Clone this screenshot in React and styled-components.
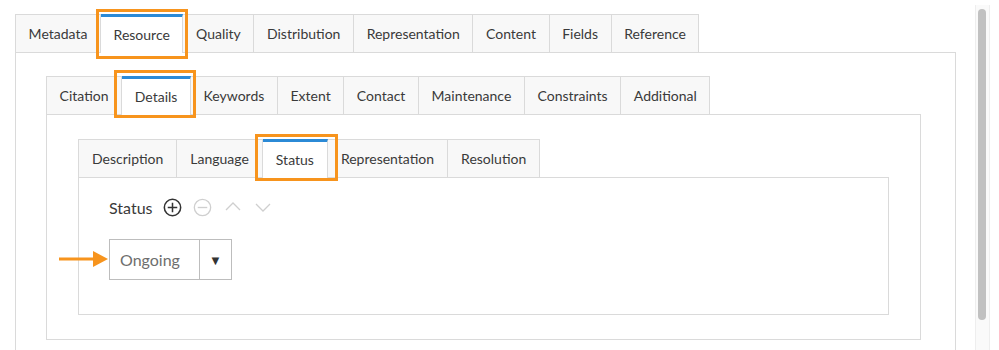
import styled, { createGlobalStyle } from "styled-components";

const GlobalStyle = createGlobalStyle`
  html, body {
    margin: 0;
    padding: 0;
    background: #fff;
    overflow: hidden;
  }
  body {
    font-family: Lato, "Noto Sans", sans-serif;
    color: #3a3a3a;
  }
`;

const ORANGE = "#f7941d";
const BLUE = "#2b8ad6";
const LINE = "#dadada";

const outerTabs = ["Metadata", "Resource", "Quality", "Distribution", "Representation", "Content", "Fields", "Reference"];
const detailTabs = ["Citation", "Details", "Keywords", "Extent", "Contact", "Maintenance", "Constraints", "Additional"];
const statusTabs = ["Description", "Language", "Status", "Representation", "Resolution"];

const Page = styled.div`
  display: flex;
  width: 999px;
  height: 350px;
`;

const Main = styled.div`
  flex: 1;
  padding: 14px 19px 0 15px;
  min-width: 0;
`;

const Scrollbar = styled.div`
  width: 13px;
  margin: 5px 9px 0 0;
  border-left: 1px solid #eee;
  border-right: 1px solid #eee;
  background: #fafafa;
  padding-top: 4px;
`;

const Thumb = styled.div`
  width: 8px;
  height: 311px;
  margin-left: 2px;
  border-radius: 4px;
  background: #c1c1c1;
`;

const TabBar = styled.div`
  display: flex;
  align-items: flex-end;
  height: 38px;
`;

const Tab = styled.div`
  position: relative;
  box-sizing: border-box;
  height: ${(p) => (p.$active ? "39px" : "38px")};
  margin-bottom: ${(p) => (p.$active ? "-1px" : "0")};
  display: flex;
  align-items: center;
  padding: 0 ${(p) => p.$pad || 12}px;
  padding-bottom: ${(p) => (p.$active ? "1px" : "0")};
  font-size: 14px;
  color: #3a3a3a;
  white-space: nowrap;
  background: ${(p) => (p.$active ? "#fff" : "#f8f8f8")};
  border: 1px solid ${LINE};
  border-bottom: none;
  border-left-width: ${(p) => (p.$first ? "1px" : "0")};
  border-top: ${(p) => (p.$active ? `3px solid ${BLUE}` : `1px solid ${LINE}`)};
  z-index: ${(p) => (p.$active ? 2 : 1)};

  ${(p) =>
    p.$mark &&
    `
    &::after {
      content: "";
      position: absolute;
      top: ${p.$mark[0]}px;
      right: ${p.$mark[1]}px;
      bottom: ${p.$mark[2]}px;
      left: ${p.$mark[3]}px;
      border: 3px solid ${ORANGE};
      pointer-events: none;
    }
  `}
`;

const Panel = styled.div`
  position: relative;
  border: 1px solid ${LINE};
  background: #fff;
  padding: ${(p) => p.$pad};
  height: ${(p) => p.$height || "auto"};
  box-sizing: border-box;
`;

const FieldHead = styled.div`
  display: flex;
  align-items: center;
  gap: 10px;
  font-size: 16px;
  color: #3a3a3a;
  height: 20px;
`;

const IconBtn = styled.span`
  display: inline-flex;
  width: 20px;
  height: 20px;
  align-items: center;
  justify-content: center;
  color: ${(p) => (p.$dim ? "#cfcfcf" : "#333")};
`;

const SelectRow = styled.div`
  position: relative;
  margin-top: 22px;
  display: flex;
  width: 123px;
  height: 41px;
  box-sizing: border-box;
  border: 1px solid #bdbdbd;
`;

const SelectValue = styled.div`
  flex: 1;
  display: flex;
  align-items: center;
  padding-left: 10px;
  font-size: 16px;
  color: #6e6e6e;
  border-right: 1px solid #bdbdbd;
`;

const SelectCaret = styled.div`
  width: 31px;
  display: flex;
  align-items: center;
  justify-content: center;
  font-size: 13px;
  color: #333;
`;

const Pointer = styled.svg`
  position: absolute;
  left: -51px;
  top: 10px;
`;

const PlusCircle = () => (
  <svg width="19" height="19" viewBox="0 0 20 20" fill="none" stroke="currentColor" strokeWidth="1.6">
    <circle cx="10" cy="10" r="8.6" />
    <path d="M10 5v10M5 10h10" />
  </svg>
);

const MinusCircle = () => (
  <svg width="19" height="19" viewBox="0 0 20 20" fill="none" stroke="currentColor" strokeWidth="1.4">
    <circle cx="10" cy="10" r="8.6" />
    <path d="M5 10h10" />
  </svg>
);

const Chevron = ({ up }) => (
  <svg width="18" height="12" viewBox="0 0 18 12" fill="none" stroke="currentColor" strokeWidth="1.3">
    <path d={up ? "M2 9l7-7 7 7" : "M2 3l7 7 7-7"} />
  </svg>
);

const Tabs = ({ items, active, mark, pad }) => (
  <TabBar>
    {items.map((name, i) => (
      <Tab
        key={name}
        $first={i === 0}
        $active={name === active}
        $mark={name === active ? mark : null}
        $pad={pad}
      >
        {name}
      </Tab>
    ))}
  </TabBar>
);

export default function App() {
  return (
    <Page>
      <GlobalStyle />
      <Main>
        <Tabs items={outerTabs} active="Resource" pad={12.6} mark={[-8, -6, -6, -5]} />
        <Panel $pad="23px 34px 0 30px" $height="330px">
          <Tabs items={detailTabs} active="Details" pad={12.6} mark={[-9, -6, -3, -8]} />
          <Panel $pad="24px 31px 24px 31px">
            <Tabs items={statusTabs} active="Status" pad={13} mark={[-8, -11, -3, -8]} />
            <Panel $pad="19px 30px 30px 30px" $height="138px">
              <FieldHead>
                <span>Status</span>
                <IconBtn>
                  <PlusCircle />
                </IconBtn>
                <IconBtn $dim>
                  <MinusCircle />
                </IconBtn>
                <IconBtn $dim>
                  <Chevron up />
                </IconBtn>
                <IconBtn $dim>
                  <Chevron />
                </IconBtn>
              </FieldHead>
              <SelectRow>
                <Pointer width="50" height="18" viewBox="0 0 50 18">
                  <path d="M0 9h36" stroke={ORANGE} strokeWidth="3" />
                  <path d="M34 1l15 8-15 8z" fill={ORANGE} />
                </Pointer>
                <SelectValue>Ongoing</SelectValue>
                <SelectCaret>▼</SelectCaret>
              </SelectRow>
            </Panel>
          </Panel>
        </Panel>
      </Main>
      <Scrollbar>
        <Thumb />
      </Scrollbar>
    </Page>
  );
}
